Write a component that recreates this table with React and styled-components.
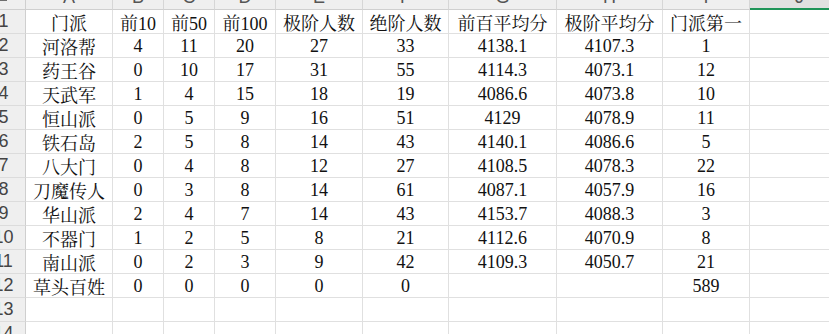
import React from 'react'
import styled, { createGlobalStyle } from 'styled-components'

const columns = [
  { key: 'A', width: 87 },
  { key: 'B', width: 51 },
  { key: 'C', width: 51 },
  { key: 'D', width: 61 },
  { key: 'E', width: 87 },
  { key: 'F', width: 86 },
  { key: 'G', width: 108 },
  { key: 'H', width: 106 },
  { key: 'I', width: 87 },
  { key: 'J', width: 100 },
]

const rows = [
  ['门派', '前10', '前50', '前100', '极阶人数', '绝阶人数', '前百平均分', '极阶平均分', '门派第一'],
  ['河洛帮', '4', '11', '20', '27', '33', '4138.1', '4107.3', '1'],
  ['药王谷', '0', '10', '17', '31', '55', '4114.3', '4073.1', '12'],
  ['天武军', '1', '4', '15', '18', '19', '4086.6', '4073.8', '10'],
  ['恒山派', '0', '5', '9', '16', '51', '4129', '4078.9', '11'],
  ['铁石岛', '2', '5', '8', '14', '43', '4140.1', '4086.6', '5'],
  ['八大门', '0', '4', '8', '12', '27', '4108.5', '4078.3', '22'],
  ['刀魔传人', '0', '3', '8', '14', '61', '4087.1', '4057.9', '16'],
  ['华山派', '2', '4', '7', '14', '43', '4153.7', '4088.3', '3'],
  ['不器门', '1', '2', '5', '8', '21', '4112.6', '4070.9', '8'],
  ['南山派', '0', '2', '3', '9', '42', '4109.3', '4050.7', '21'],
  ['草头百姓', '0', '0', '0', '0', '0', '', '', '589'],
  [],
  [],
]

const GlobalStyle = createGlobalStyle`
  body {
    margin: 0;
    background: #ffffff;
    overflow: hidden;
  }
`

const Sheet = styled.div`
  display: grid;
  grid-template-columns: 26px ${columns.map(c => c.width + 'px').join(' ')};
  grid-auto-rows: 24px;
  margin-top: -14px;
  width: max-content;
`

const Corner = styled.div`
  background: #efefef;
  border-right: 1px solid #cfcfcf;
  border-bottom: 1px solid #cfcfcf;
  position: relative;

  &::after {
    content: '';
    position: absolute;
    left: 0;
    bottom: 8px;
    width: 7px;
    height: 3px;
    background: #6e6e6e;
  }
`

const ColHead = styled.div`
  display: flex;
  align-items: center;
  justify-content: center;
  background: ${p => (p.$active ? '#e1e1e1' : '#efefef')};
  border-right: 1px solid #d6d6d6;
  border-bottom: ${p => (p.$active ? '2px solid #1f9458' : '1px solid #cfcfcf')};
  color: #555555;
  font-family: 'Liberation Sans', Arial, sans-serif;
  font-size: 18px;
`

const RowHead = styled.div`
  display: flex;
  align-items: center;
  justify-content: center;
  padding-right: 18px;
  background: #efefef;
  border-right: 1px solid #cfcfcf;
  border-bottom: 1px solid #dcdcdc;
  color: #444444;
  font-family: 'Liberation Sans', Arial, sans-serif;
  font-size: 18px;
`

const Cell = styled.div`
  display: flex;
  align-items: center;
  justify-content: center;
  padding-top: 1px;
  border-right: 1px solid #e0e0e0;
  border-bottom: 1px solid #e0e0e0;
  color: #111111;
  font-family: 'Liberation Serif', 'Noto Serif CJK SC', 'Noto Sans CJK SC', serif;
  font-size: 18px;
  white-space: nowrap;
`

const App = () => {
  return (
    <>
      <GlobalStyle />
      <Sheet>
        <Corner />
        {columns.map(col => (
          <ColHead key={col.key} $active={col.key === 'J'}>
            {col.key}
          </ColHead>
        ))}
        {rows.map((row, r) => (
          <React.Fragment key={r}>
            <RowHead>{r + 1}</RowHead>
            {columns.map((col, c) => (
              <Cell key={col.key}>{row[c] || ''}</Cell>
            ))}
          </React.Fragment>
        ))}
      </Sheet>
    </>
  )
}

export default App
